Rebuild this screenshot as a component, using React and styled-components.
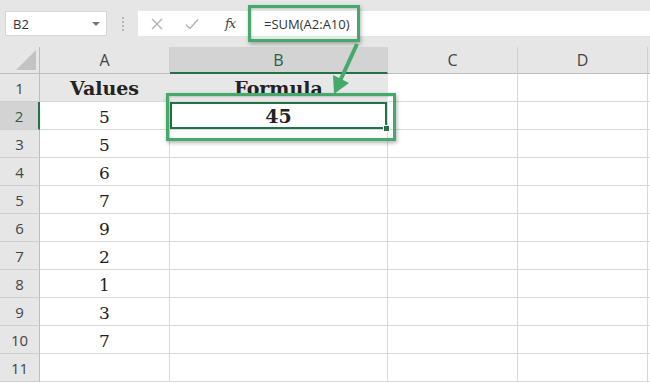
import React from "react";
import styled, { createGlobalStyle } from "styled-components";

const GREEN = "#44a96a";
const DARK = "#217346";

const Global = createGlobalStyle`
  html, body { margin: 0; padding: 0; background: #fff; overflow: hidden; }
`;

const Frame = styled.div`
  position: relative;
  width: 650px;
  height: 383px;
  overflow: hidden;
  font-family: "Open Sans", "Noto Sans", sans-serif;
  background: #fff;
`;

const Toolbar = styled.div`
  height: 47px;
  background: #e6e6e6;
  display: flex;
  align-items: center;
  padding-left: 5px;
  box-sizing: border-box;
`;

const NameBox = styled.div`
  width: 102px;
  height: 25px;
  box-sizing: border-box;
  background: #fff;
  border: 1px solid #d6d6d6;
  display: flex;
  align-items: center;
  justify-content: space-between;
  padding: 0 6px 0 7px;
  font-size: 13px;
  color: #333;
`;

const Caret = styled.span`
  width: 0;
  height: 0;
  border-left: 4px solid transparent;
  border-right: 4px solid transparent;
  border-top: 4px solid #777;
`;

const Dots = styled.div`
  width: 31px;
  display: flex;
  flex-direction: column;
  align-items: center;
  gap: 2px;
  span {
    width: 2px;
    height: 2px;
    background: #b5b5b5;
  }
`;

const FormulaBar = styled.div`
  flex: 1;
  height: 25px;
  background: #fff;
  display: flex;
  align-items: center;
  font-size: 13px;
  color: #333;
  white-space: nowrap;
`;

const BarIcon = styled.div`
  width: ${(p) => p.w}px;
  display: flex;
  justify-content: center;
  align-items: center;
`;

const Fx = styled.span`
  font-family: "DejaVu Serif", "Liberation Serif", serif;
  font-style: italic;
  font-size: 13px;
  color: #444;
  letter-spacing: -1px;
`;

const FormulaText = styled.span`
  padding-left: 12px;
`;

const Sheet = styled.div`
  display: grid;
  grid-template-columns: 40px 130px 218px 130px 130px 12px;
  grid-template-rows: 27px repeat(11, 28px);
`;

const Corner = styled.div`
  background: #e6e6e6;
  border-right: 1px solid #bdbdbd;
  border-bottom: 1px solid #bdbdbd;
  display: flex;
  align-items: flex-end;
  justify-content: flex-end;
  padding: 0 3px 3px 0;
  box-sizing: border-box;
  &::after {
    content: "";
    width: 0;
    height: 0;
    border-left: 20px solid transparent;
    border-bottom: 20px solid #c3c3c3;
  }
`;

const ColHead = styled.div`
  background: ${(p) => (p.active ? "#d3d3d3" : "#e6e6e6")};
  border-right: 1px solid #d0d0d0;
  border-bottom: ${(p) => (p.active ? `2px solid ${DARK}` : "1px solid #bdbdbd")};
  box-sizing: border-box;
  display: flex;
  align-items: center;
  justify-content: center;
  font-size: 16px;
  color: ${(p) => (p.active ? "#2c5e3f" : "#444")};
`;

const RowHead = styled.div`
  background: ${(p) => (p.active ? "#d3d3d3" : "#e6e6e6")};
  border-right: ${(p) => (p.active ? `2px solid ${DARK}` : "1px solid #bdbdbd")};
  border-bottom: 1px solid #cfcfcf;
  box-sizing: border-box;
  display: flex;
  align-items: center;
  justify-content: center;
  font-size: 15px;
  color: ${(p) => (p.active ? "#2c5e3f" : "#444")};
`;

const Cell = styled.div`
  position: relative;
  background: ${(p) => (p.head ? "#e7e7e7" : "#fff")};
  border-right: 1px solid ${(p) => (p.head ? "#e7e7e7" : "#d9d9d9")};
  border-bottom: 1px solid #d9d9d9;
  box-sizing: border-box;
  display: flex;
  align-items: flex-end;
  justify-content: center;
  padding-bottom: 3px;
  font-family: "DejaVu Serif", "Liberation Serif", serif;
  font-size: ${(p) => (p.bold ? "19px" : "17px")};
  font-weight: ${(p) => (p.bold ? 700 : 400)};
  line-height: 1;
  color: #222;
  box-shadow: ${(p) => (p.selected ? `inset 0 0 0 2px ${DARK}` : "none")};
`;

const FillHandle = styled.span`
  position: absolute;
  right: -3px;
  bottom: -3px;
  width: 5px;
  height: 5px;
  background: ${DARK};
  border: 1px solid #fff;
  z-index: 2;
`;

const Highlight = styled.div`
  position: absolute;
  left: ${(p) => p.x}px;
  top: ${(p) => p.y}px;
  width: ${(p) => p.w}px;
  height: ${(p) => p.h}px;
  box-sizing: border-box;
  border: 3px solid ${GREEN};
  box-shadow: 1px 2px 4px rgba(0, 0, 0, 0.3), inset 1px 1px 2px rgba(0, 0, 0, 0.15);
  pointer-events: none;
  z-index: 3;
`;

const Arrow = styled.svg`
  position: absolute;
  left: 320px;
  top: 38px;
  z-index: 4;
  overflow: visible;
`;

const cols = ["A", "B", "C", "D"];
const values = [5, 5, 6, 7, 9, 2, 1, 3, 7];

function Row({ n }) {
  const header = n === 1;
  const a = header ? "Values" : values[n - 2] ?? "";
  const b = header ? "Formula" : n === 2 ? "45" : "";
  return (
    <>
      <RowHead active={n === 2}>{n}</RowHead>
      <Cell head={header} bold={header}>{a}</Cell>
      <Cell head={header} bold={header || n === 2} selected={n === 2}>
        {b}
        {n === 2 && <FillHandle />}
      </Cell>
      <Cell />
      <Cell />
      <Cell />
    </>
  );
}

export default function App() {
  return (
    <Frame>
      <Global />
      <Toolbar>
        <NameBox>
          B2
          <Caret />
        </NameBox>
        <Dots>
          <span />
          <span />
          <span />
          <span />
        </Dots>
        <FormulaBar>
          <BarIcon w={38}>
            <svg width="12" height="12" viewBox="0 0 12 12">
              <path d="M1 1 L11 11 M11 1 L1 11" stroke="#b0b0b0" strokeWidth="1.3" fill="none" />
            </svg>
          </BarIcon>
          <BarIcon w={32}>
            <svg width="14" height="12" viewBox="0 0 14 12">
              <path d="M1 6.5 L5 10.5 L13 1.5" stroke="#b0b0b0" strokeWidth="1.3" fill="none" />
            </svg>
          </BarIcon>
          <BarIcon w={44}>
            <Fx>fx</Fx>
          </BarIcon>
          <FormulaText>=SUM(A2:A10)</FormulaText>
        </FormulaBar>
      </Toolbar>
      <Sheet>
        <Corner />
        {cols.map((c) => (
          <ColHead key={c} active={c === "B"}>{c}</ColHead>
        ))}
        <ColHead />
        {Array.from({ length: 11 }, (_, i) => (
          <Row key={i} n={i + 1} />
        ))}
      </Sheet>
      <Highlight x={248} y={5} w={112} h={37} />
      <Highlight x={166} y={93} w={230} h={48} />
      <Arrow width="40" height="60" viewBox="320 38 40 60">
        <line x1="357" y1="44" x2="340" y2="81" stroke={GREEN} strokeWidth="4" />
        <polygon points="334,94 333,75 349,83" fill={GREEN} />
      </Arrow>
    </Frame>
  );
}
